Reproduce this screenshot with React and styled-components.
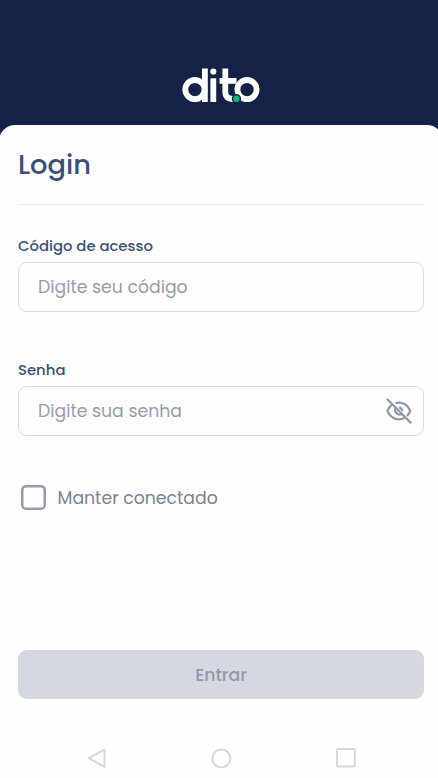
import React from 'react'
import styled, { createGlobalStyle } from 'styled-components'

const GlobalStyle = createGlobalStyle`
	* {
		box-sizing: border-box;
	}

	body {
		margin: 0;
		overflow: hidden;
		background: #fefefe;
		font-family: Poppins, Inter, 'Liberation Sans', sans-serif;
	}
`

const Screen = styled.main`
	width: 442px;
	height: 778px;
	display: flex;
	flex-direction: column;
	background: #142248;
`

const Header = styled.header`
	height: 125px;
	flex: none;
	display: flex;
	justify-content: center;
	padding-top: 64px;
`

const Panel = styled.section`
	flex: 1;
	margin: 0 -1px;
	padding: 0 19px;
	display: flex;
	flex-direction: column;
	background: #fefefe;
	border-radius: 16px 16px 0 0;
`

const Title = styled.h1`
	height: 80px;
	margin: 0;
	padding-top: 20px;
	border-bottom: 1px solid #ececee;
	color: #3a5078;
	font-size: 27.3px;
	font-weight: 500;
	line-height: 40px;
`

const Form = styled.form`
	display: flex;
	flex-direction: column;
	padding-top: 29px;
`

const Field = styled.div`
	display: flex;
	flex-direction: column;
	height: 124px;
`

const Label = styled.label`
	height: 28px;
	color: #3a5078;
	font-size: 14.85px;
	font-weight: 500;
	line-height: 24px;
`

const InputBox = styled.div`
	height: 50px;
	display: flex;
	align-items: center;
	padding: 0 11px 0 19px;
	border: 1.5px solid #d9dbe1;
	border-radius: 9px;
`

const Input = styled.input`
	flex: 1;
	min-width: 0;
	padding: 0;
	border: 0;
	outline: 0;
	background: transparent;
	font-family: inherit;
	font-size: 17.3px;

	&::placeholder {
		color: #959dad;
		opacity: 1;
	}
`

const IconButton = styled.button`
	display: flex;
	padding: 0;
	border: 0;
	background: none;
`

const Remember = styled.label`
	height: 25px;
	display: flex;
	align-items: center;
	gap: 12px;
	margin-top: 3px;
	padding-left: 2.5px;
	color: #788395;
	font-size: 17.3px;
`

const Checkbox = styled.input`
	appearance: none;
	width: 25px;
	height: 25px;
	margin: 0;
	box-shadow: inset 0 0 0 2.5px #959dad;
	border-radius: 5px;
`

const Submit = styled.button`
	height: 49px;
	margin-top: 140px;
	padding: 0;
	border: 0;
	border-radius: 9px;
	background: #d5d8e0;
	color: #929bac;
	font-family: inherit;
	font-size: 17.3px;
	font-weight: 500;
`

const NavBar = styled.nav`
	height: 20px;
	flex: none;
	display: flex;
	justify-content: space-between;
	margin-top: 49px;
	padding: 0 68px 0 69px;
	overflow: hidden;
`

function Logo() {
	return (
		<svg width="80" height="42" viewBox="181 64 80 42" role="img" aria-label="dito">
			<g fill="none" stroke="#fff" strokeWidth="5.8">
				<circle cx="194.9" cy="89.6" r="9.6" />
				<path d="M204.9 68.5V102M213.3 78.3V102M225.3 68.5V91.5Q225.3 99 233 99M219.5 80.8H236.5" />
				<circle cx="247" cy="89.6" r="9.6" />
			</g>
			<circle cx="213.3" cy="71.5" r="3.1" fill="#fff" />
			<circle cx="236.4" cy="98.7" r="4.7" fill="#142248" />
			<circle cx="236.4" cy="98.7" r="3.2" fill="#0fb77a" />
		</svg>
	)
}

function EyeOff() {
	return (
		<svg width="26" height="26" viewBox="0 0 26 26" fill="none" stroke="#8f98a9" strokeWidth="2.3" strokeLinecap="round">
			<path d="M1.5 1.5L24.5 24.5" />
			<path d="M10.5 4.8C17 3.6 22 7.2 24.2 12.9C23.7 14.6 22.7 16 21.5 17.2" />
			<path d="M5.5 7.1C3.6 8.6 2.2 10.6 1.5 12.9C4.7 21 12.3 23 18.2 20" />
			<path d="M9.6 10C8 13.7 11.5 18 15.6 16M13.8 9.7Q15.8 10.4 16.2 12.2" />
		</svg>
	)
}

function App() {
	return (
		<>
			<GlobalStyle />
			<Screen>
				<Header>
					<Logo />
				</Header>
				<Panel>
					<Title>Login</Title>
					<Form onSubmit={(e) => e.preventDefault()}>
						<Field>
							<Label htmlFor="code">Código de acesso</Label>
							<InputBox>
								<Input id="code" placeholder="Digite seu código" />
							</InputBox>
						</Field>
						<Field>
							<Label htmlFor="password">Senha</Label>
							<InputBox>
								<Input id="password" type="password" placeholder="Digite sua senha" />
								<IconButton type="button" aria-label="Mostrar senha">
									<EyeOff />
								</IconButton>
							</InputBox>
						</Field>
						<Remember>
							<Checkbox type="checkbox" />
							Manter conectado
						</Remember>
						<Submit disabled>Entrar</Submit>
					</Form>
					<NavBar>
						<svg width="20" height="22" viewBox="0 0 20 22" fill="none" stroke="#d8d8d8" strokeWidth="2" strokeLinejoin="round">
							<path d="M17.5 1.5V19L2 10.2Z" />
						</svg>
						<svg width="22" height="22" viewBox="0 0 22 22" fill="none" stroke="#d8d8d8" strokeWidth="2">
							<circle cx="10.4" cy="10.4" r="9" />
						</svg>
						<svg width="20" height="22" viewBox="0 0 20 22" fill="none" stroke="#d8d8d8" strokeWidth="2">
							<rect x="1" y="1" width="17.8" height="17.5" rx="1" />
						</svg>
					</NavBar>
				</Panel>
			</Screen>
		</>
	)
}

export default App
